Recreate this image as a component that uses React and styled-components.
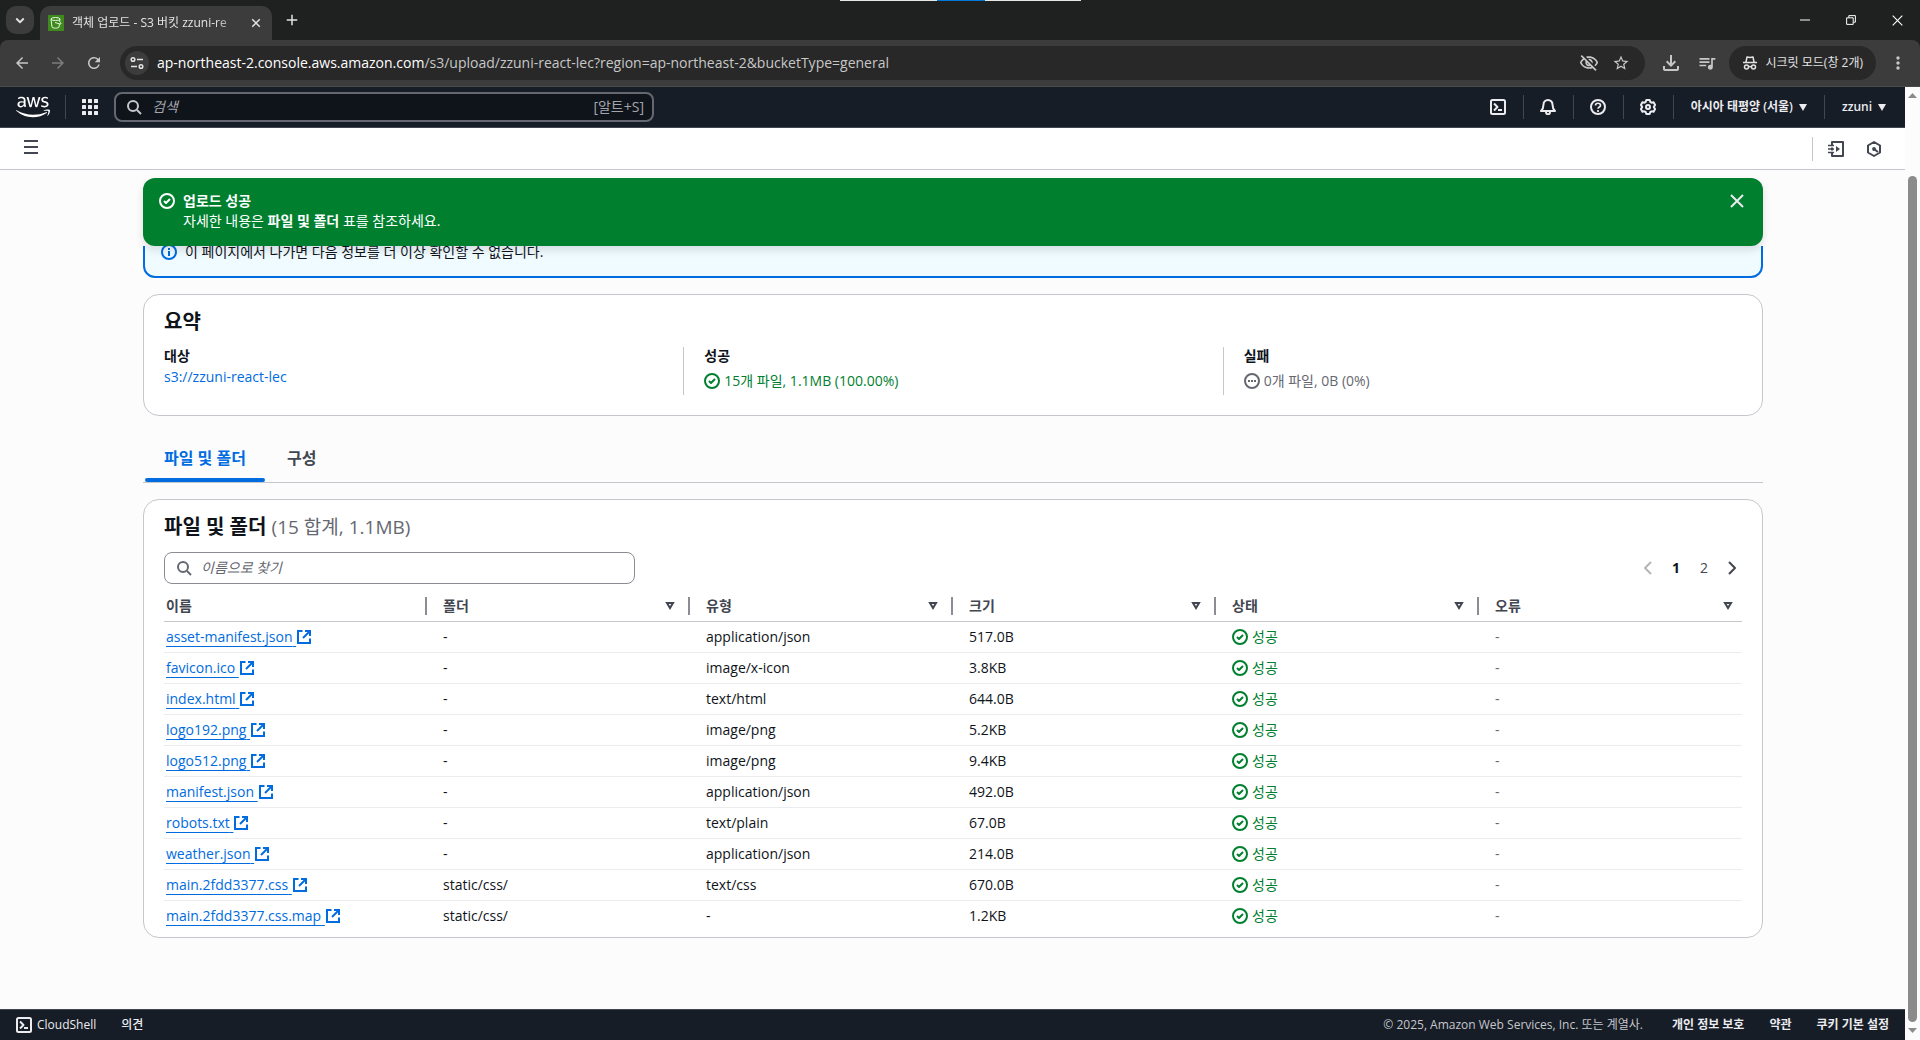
import React, { useState } from 'react'
import styled, { createGlobalStyle } from 'styled-components';
import {
  MdArrowBack,
  MdArrowForward,
  MdRefresh,
  MdOutlineVisibilityOff,
  MdStarBorder,
  MdOutlineFileDownload,
  MdQueueMusic,
  MdMoreVert,
} from 'react-icons/md';
import { FaAws } from 'react-icons/fa';

const files = [
  { name: 'asset-manifest.json', folder: '-', type: 'application/json', size: '517.0B' },
  { name: 'favicon.ico', folder: '-', type: 'image/x-icon', size: '3.8KB' },
  { name: 'index.html', folder: '-', type: 'text/html', size: '644.0B' },
  { name: 'logo192.png', folder: '-', type: 'image/png', size: '5.2KB' },
  { name: 'logo512.png', folder: '-', type: 'image/png', size: '9.4KB' },
  { name: 'manifest.json', folder: '-', type: 'application/json', size: '492.0B' },
  { name: 'robots.txt', folder: '-', type: 'text/plain', size: '67.0B' },
  { name: 'weather.json', folder: '-', type: 'application/json', size: '214.0B' },
  { name: 'main.2fdd3377.css', folder: 'static/css/', type: 'text/css', size: '670.0B' },
  { name: 'main.2fdd3377.css.map', folder: 'static/css/', type: '-', size: '1.2KB' },
];

const columns = ['이름', '폴더', '유형', '크기', '상태', '오류'];

/* ---------- icons (16 x 16, 2px strokes) ---------- */

const Icon = ({ size = 16, width = 2, children }) => (
  <svg width={size} height={size} viewBox="0 0 16 16" fill="none" stroke="currentColor"
    strokeWidth={width} strokeLinejoin="round" aria-hidden="true">
    {children}
  </svg>
);

const CheckIcon = () => (
  <Icon>
    <circle cx="8" cy="8" r="7" />
    <path d="M5 8l2 2 4-4" />
  </Icon>
);

const PendingIcon = () => (
  <Icon>
    <circle cx="8" cy="8" r="7" />
    <path d="M4 8h2M7 8h2M10 8h2" />
  </Icon>
);

const InfoIcon = () => (
  <Icon>
    <circle cx="8" cy="8" r="7" />
    <path d="M8 7v5M8 4v2" />
  </Icon>
);

const CloseIcon = () => <Icon><path d="M2 2l12 12M14 2L2 14" /></Icon>;

const SearchIcon = () => (
  <Icon>
    <circle cx="7" cy="7" r="5" />
    <path d="M15 15l-4-4" />
  </Icon>
);

const ExternalIcon = () => (
  <Icon>
    <path d="M6.500 2H2v12h12V9.500M9 2h5v5" strokeLinejoin="miter" />
    <path d="M7 9l7-7" />
  </Icon>
);

const ShellIcon = () => (
  <Icon>
    <rect x="1" y="1" width="14" height="14" rx="1.500" />
    <path d="M4 4.500L7.500 8 4 11.500M8 11h4" />
  </Icon>
);

const BellIcon = () => (
  <Icon>
    <path d="M1 12h14c-2-2-2.500-3.500-2.500-6.500a4.500 4.500 0 0 0-9 0C3.500 8.500 3 10 1 12z" />
    <path d="M6 13c0 3 4 3 4 0" />
  </Icon>
);

const HelpIcon = () => (
  <Icon>
    <circle cx="8" cy="8" r="7" />
    <path d="M5.500 6.500c0-3 5-3 5 0C10.500 8 8 8 8 9.800M8 11v2" strokeWidth="1.700" />
  </Icon>
);

const GearIcon = () => (
  <Icon>
    <path d="M6.300 1h3.400l.6 2 1.300.7 2-.5 1.500 2.700L13.800 8l1.300 2.100-1.500 2.700-2-.5-1.300.7-.6 2H6.300l-.6-2-1.300-.7-2 .5-1.500-2.700L2.200 8 .9 5.900l1.500-2.700 2 .5L5.700 3z" />
    <circle cx="8" cy="8" r="2" />
  </Icon>
);

const TutorialIcon = () => (
  <Icon>
    <path d="M4 4V1h11v14H4v-3M4 6.500v3" />
    <path d="M0 4.500h6M0 8h6M0 11.500h6" strokeWidth="1.600" />
    <path d="M8 5l4 3-4 3z" fill="currentColor" stroke="none" />
  </Icon>
);

const HexIcon = () => (
  <Icon>
    <path d="M8 1l6 3.500v7L8 15l-6-3.500v-7z" />
    <path d="M8 8l4 3" />
    <circle cx="8" cy="8" r="1.900" fill="currentColor" stroke="none" />
  </Icon>
);

const GridIcon = () => (
  <svg width="16" height="16" viewBox="0 0 16 16" fill="currentColor" aria-hidden="true">
    {[0, 6, 12].map((y) => [0, 6, 12].map((x) => <rect key={x + '-' + y} x={x} y={y} width="4" height="4" rx="0.500" />))}
  </svg>
);

const FilterIcon = () => (
  <svg width="10" height="8" viewBox="0 0 10 8" fill="none" stroke="currentColor" strokeWidth="2" aria-hidden="true">
    <path d="M2 1h6L5 6z" />
  </svg>
);

const CaretIcon = () => (
  <svg width="8" height="7" viewBox="0 0 8 7" fill="currentColor" aria-hidden="true"><path d="M0 0h8L4 7z" /></svg>
);

const BucketIcon = () => (
  <svg width="16" height="16" viewBox="0 0 16 16" fill="none" stroke="#e9f5df" aria-hidden="true">
    <rect width="16" height="16" fill="#3f8a1f" stroke="none" />
    <ellipse cx="7.500" cy="4" rx="4.500" ry="1.500" />
    <path d="M3 4l1 8c0 1.500 7 1.500 7 0l.4-3M12 4l-.4 3M7 7.500l5 1.500c1.500.2 1.500-1 0-1.500" />
  </svg>
);

const TuneIcon = () => (
  <Icon width="1.500">
    <circle cx="4" cy="4.500" r="1.800" />
    <path d="M8 4.500h6M2 11.500h6" />
    <circle cx="12" cy="11.500" r="1.800" />
  </Icon>
);

const IncognitoIcon = () => (
  <Icon width="1.500">
    <path d="M4 7l1-5 3 .5L11 2l1 5M1 7.500h14" />
    <circle cx="4.500" cy="12" r="2" />
    <circle cx="11.500" cy="12" r="2" />
    <path d="M6.500 12q1.500-1 3 0" />
  </Icon>
);

export default function App() {
  const [query, setQuery] = useState('');
  const [search, setSearch] = useState('');

  return (
    <Window>
      <GlobalStyle />
      <ScreenHandle><i /></ScreenHandle>
      <TabStrip>
        <TabSearch aria-label="탭 검색">
          <Icon size={12} width={2.4}><path d="M3 6l5 5 5-5" /></Icon>
        </TabSearch>
        <BrowserTab>
          <BucketIcon />
          <span>객체 업로드 - S3 버킷 zzuni-re</span>
          <TabButton aria-label="탭 닫기"><Icon size={12}><path d="M3 3l10 10M13 3L3 13" /></Icon></TabButton>
        </BrowserTab>
        <TabButton aria-label="새 탭"><Icon size={14} width={1.7}><path d="M8 2v12M2 8h12" /></Icon></TabButton>
        <WindowButtons>
          <TabButton aria-label="최소화"><Icon size={10} width={1.6}><path d="M0 8h16" /></Icon></TabButton>
          <TabButton aria-label="이전 크기로 복원">
            <Icon size={10} width={1.6}><path d="M1 4.500h10.500V15H1zM4.500 4V1H15v10.500h-3" strokeLinejoin="miter" /></Icon>
          </TabButton>
          <TabButton aria-label="닫기"><Icon size={11} width={1.6}><path d="M1 1l14 14M15 1L1 15" /></Icon></TabButton>
        </WindowButtons>
      </TabStrip>

      <Toolbar>
        <ToolButton aria-label="뒤로"><MdArrowBack size={18} /></ToolButton>
        <ToolButton aria-label="앞으로" disabled><MdArrowForward size={18} /></ToolButton>
        <ToolButton aria-label="새로고침"><MdRefresh size={18} /></ToolButton>
        <Omnibox>
          <SiteInfo aria-label="사이트 정보"><TuneIcon /></SiteInfo>
          <Url><b>ap-northeast-2.console.aws.amazon.com</b>/s3/upload/zzuni-react-lec?region=ap-northeast-2&amp;bucketType=general</Url>
          <ToolButton aria-label="쿠키 차단됨" $w={32}><MdOutlineVisibilityOff size={20} /></ToolButton>
          <ToolButton aria-label="북마크" $w={32}><MdStarBorder size={18} /></ToolButton>
        </Omnibox>
        <ToolButton aria-label="다운로드"><MdOutlineFileDownload size={24} /></ToolButton>
        <ToolButton aria-label="미디어"><MdQueueMusic size={20} /></ToolButton>
        <Incognito><IncognitoIcon />시크릿 모드(창 2개)</Incognito>
        <ToolButton aria-label="더보기"><MdMoreVert size={20} /></ToolButton>
      </Toolbar>

      <Viewport>
        <Page>
          <AwsNav>
            <LogoLink href="#home" aria-label="AWS"><FaAws size={34} /></LogoLink>
            <NavLine />
            <NavButton aria-label="서비스" $w={48}><GridIcon /></NavButton>
            <NavSearch>
              <SearchIcon />
              <input aria-label="검색" placeholder="검색" value={search} onChange={(e) => setSearch(e.target.value)} />
              <span>[알트+S]</span>
            </NavSearch>
            <NavTools>
              <NavButton aria-label="CloudShell"><ShellIcon /></NavButton>
              <NavLine />
              <NavButton aria-label="알림"><BellIcon /></NavButton>
              <NavLine />
              <NavButton aria-label="지원"><HelpIcon /></NavButton>
              <NavLine />
              <NavButton aria-label="설정"><GearIcon /></NavButton>
              <NavLine />
              <NavMenu>아시아 태평양 (서울)<CaretIcon /></NavMenu>
              <NavLine />
              <NavMenu>zzuni<CaretIcon /></NavMenu>
            </NavTools>
          </AwsNav>

          <SubBar>
            <MenuButton aria-label="탐색 열기">
              <Icon><path d="M1 2h14M1 8h14M1 14h14" /></Icon>
            </MenuButton>
            <SubTools>
              <IconButton aria-label="자습서"><TutorialIcon /></IconButton>
              <IconButton aria-label="도구"><HexIcon /></IconButton>
            </SubTools>
          </SubBar>

          <Main>
            <Flash role="status">
              <CheckIcon />
              <div>
                <strong>업로드 성공</strong>
                <p>자세한 내용은 <strong>파일 및 폴더</strong> 표를 참조하세요.</p>
              </div>
              <FlashClose aria-label="닫기"><CloseIcon /></FlashClose>
            </Flash>
            <ScrolledArea>
              <Alert>
                <InfoIcon />
                이 페이지에서 나가면 다음 정보를 더 이상 확인할 수 없습니다.
              </Alert>
            </ScrolledArea>

            <Summary>
              <Title>요약</Title>
              <Stats>
                <Stat>
                  <dt>대상</dt>
                  <dd><a href="#bucket">s3://zzuni-react-lec</a></dd>
                </Stat>
                <Stat>
                  <dt>성공</dt>
                  <dd><Status $tall><CheckIcon />15개 파일, 1.1MB (100.00%)</Status></dd>
                </Stat>
                <Stat>
                  <dt>실패</dt>
                  <dd><Status $tall $muted><PendingIcon />0개 파일, 0B (0%)</Status></dd>
                </Stat>
              </Stats>
            </Summary>

            <Tabs role="tablist">
              <Tab role="tab" aria-selected="true" $active>파일 및 폴더</Tab>
              <Tab role="tab" aria-selected="false">구성</Tab>
            </Tabs>

            <FilesCard>
              <Title>파일 및 폴더 <span>(15 합계, 1.1MB)</span></Title>
              <Tools>
                <Filter>
                  <SearchIcon />
                  <input aria-label="이름으로 찾기" placeholder="이름으로 찾기" value={query} onChange={(e) => setQuery(e.target.value)} />
                </Filter>
                <Pager aria-label="페이지">
                  <PageButton aria-label="이전 페이지" disabled><Icon><path d="M11 2L5 8l6 6" /></Icon></PageButton>
                  <PageButton $current>1</PageButton>
                  <PageButton>2</PageButton>
                  <PageButton aria-label="다음 페이지"><Icon><path d="M5 2l6 6-6 6" /></Icon></PageButton>
                </Pager>
              </Tools>
              <Table>
                <thead>
                  <tr>
                    {columns.map((col, i) => (
                      <th key={col} scope="col">
                        <HeadCell $first={i === 0}>
                          {col}
                          {i > 0 && <FilterIcon />}
                        </HeadCell>
                      </th>
                    ))}
                  </tr>
                </thead>
                <tbody>
                  {files.filter((f) => f.name.includes(query)).map((f) => (
                    <tr key={f.name}>
                      <td><FileLink href={'#' + f.name}><span>{f.name}&nbsp;</span><ExternalIcon /></FileLink></td>
                      <td>{f.folder}</td>
                      <td>{f.type}</td>
                      <td>{f.size}</td>
                      <td><Status><CheckIcon />성공</Status></td>
                      <td><Dim>-</Dim></td>
                    </tr>
                  ))}
                </tbody>
              </Table>
            </FilesCard>
          </Main>

          <Footer>
            <FootButton><ShellIcon />CloudShell</FootButton>
            <FootButton>의견</FootButton>
            <Copyright>© 2025, Amazon Web Services, Inc. 또는 계열사.</Copyright>
            <FootLink href="#privacy">개인 정보 보호</FootLink>
            <FootLink href="#terms">약관</FootLink>
            <FootLink href="#cookies">쿠키 기본 설정</FootLink>
          </Footer>
        </Page>
        <Scrollbar aria-hidden="true">
          <svg width="9" height="5" viewBox="0 0 9 5"><path d="M0 5h9L4.500 0z" /></svg>
          <div />
          <svg width="9" height="5" viewBox="0 0 9 5"><path d="M0 0h9L4.500 5z" /></svg>
        </Scrollbar>
      </Viewport>
    </Window>
  )
}

const GlobalStyle = createGlobalStyle`
*{
  box-sizing: border-box;
}
body{
  margin: 0;
  font-family: "Open Sans", "Noto Sans CJK KR", sans-serif;
  font-size: 14px;
  line-height: 20px;
  color: #0f141a;
}
button, input{
  font: inherit;
  color: inherit;
}
button{
  border: none;
  background: none;
  padding: 0;
  display: flex;
  align-items: center;
  justify-content: center;
}
a{
  color: #006ce0;
  text-decoration: none;
}
svg{
  display: block;
  flex: none;
}
`;

const Window = styled.div`
display: flex;
flex-direction: column;
min-height: 100vh;
background-color: #1f2120;
`;

/* thin handle that hangs over the top edge of the window */
const ScreenHandle = styled.div`
position: absolute;
top: 0;
left: 50%;
width: 241px;
height: 1px;
margin-left: -120px;
display: flex;
justify-content: center;
background-color: #e6e6e4;

i{
  width: 48px;
  background-color: #0078d7;
}
`;

const TabStrip = styled.div`
display: flex;
align-items: center;
height: 40px;
padding-left: 6px;
color: #e3e3e3;
`;

const TabSearch = styled.button`
width: 28px;
height: 28px;
border-radius: 10px;
background-color: #3c3c3c;
`;

const BrowserTab = styled.div`
display: flex;
align-items: center;
align-self: flex-end;
width: 232px;
height: 34px;
margin: 0 6px;
padding: 0 2px 0 8px;
border-radius: 10px 10px 0 0;
background-color: #3c3c3c;
font-size: 12px;

span{
  flex: 1;
  margin-left: 8px;
  white-space: nowrap;
  mask-image: linear-gradient(to right, #000 85%, transparent);
}
`;

const TabButton = styled.button`
width: 28px;
height: 28px;
`;

const WindowButtons = styled.div`
display: flex;
gap: 18px;
margin-left: auto;
padding-right: 9px;
color: #fff;
`;

const Toolbar = styled.div`
display: flex;
align-items: center;
height: 47px;
padding: 0 4px;
border-radius: 8px 8px 0 0;
border-bottom: 1px solid #4a4a4a;
background-color: #3c3c3c;
color: #c7c7c7;
`;

const ToolButton = styled.button`
width: ${(p) => p.$w || 36}px;
height: 34px;

&:disabled{
  color: #7c7c7c;
}
`;

const Omnibox = styled.div`
display: flex;
align-items: center;
flex: 1;
height: 34px;
margin: 0 8px;
padding: 0 8px 0 5px;
border-radius: 17px;
background-color: #282828;
`;

const SiteInfo = styled.button`
width: 24px;
height: 24px;
border-radius: 50%;
background-color: #3c3c3c;
color: #e3e3e3;
`;

const Url = styled.div`
flex: 1;
margin-left: 8px;

b{
  font-weight: 400;
  color: #fff;
}
`;

const Incognito = styled.button`
gap: 8px;
height: 34px;
margin: 0 4px;
padding: 0 13px;
border-radius: 17px;
background-color: #282828;
color: #e3e3e3;
font-size: 12px;
white-space: nowrap;
`;

const Viewport = styled.div`
display: flex;
flex: 1;
`;

const Page = styled.div`
display: flex;
flex-direction: column;
flex: 1;
min-width: 0;
background-color: #fcfcfd;
`;

const AwsNav = styled.header`
display: flex;
align-items: center;
height: 41px;
border-bottom: 1px solid #424650;
background-color: #161d26;
color: #ebebf0;
`;

const LogoLink = styled.a`
display: flex;
justify-content: center;
width: 65px;
color: #fff;
`;

const NavLine = styled.span`
width: 1px;
height: 24px;
background-color: #424650;
`;

const NavButton = styled.button`
width: ${(p) => p.$w || 49}px;
height: 40px;
`;

const NavSearch = styled.label`
display: flex;
align-items: center;
width: 540px;
height: 30px;
padding: 0 8px 0 10px;
border: 2px solid #656871;
border-radius: 8px;
background-color: #0f141a;
color: #c6c6cd;

input{
  flex: 1;
  min-width: 0;
  margin-left: 8px;
  padding: 0 2px;
  border: none;
  outline: none;
  background: none;
}
input::placeholder{
  color: #a4a4ad;
  font-style: italic;
}
span{
  color: #a4a4ad;
}
`;

const NavTools = styled.div`
display: flex;
align-items: center;
margin-left: auto;
padding-right: 2px;
`;

const NavMenu = styled.button`
gap: 6px;
height: 40px;
padding: 0 17px;
font-size: 12px;
font-weight: 600;
white-space: nowrap;
`;

const SubBar = styled.div`
display: flex;
align-items: center;
justify-content: space-between;
height: 42px;
padding: 0 12px;
border-bottom: 1px solid #c6c6cd;
background-color: #fff;
color: #424650;
`;

const IconButton = styled.button`
width: 38px;
height: 24px;
`;

const MenuButton = styled(IconButton)`
align-items: flex-start;
padding-top: 2px;
`;

const SubTools = styled.div`
display: flex;
padding-left: 4px;
border-left: 1px solid #c6c6cd;
`;

const Main = styled.main`
flex: 1;
padding: 8px 142px 70px 143px;
`;

const Flash = styled.div`
position: relative;
display: flex;
gap: 8px;
height: 68px;
padding: 13px 18px 0 16px;
border-radius: 12px;
background-color: #00802f;
box-shadow: 0 4px 8px rgba(0, 7, 22, 0.12);
color: #fff;

> svg{
  margin-top: 2px;
}
> div{
  flex: 1;
}
p{
  margin: 0;
}
`;

const FlashClose = styled.button`
width: 16px;
height: 20px;
color: #ebebf0;
`;

/* only the lower part of the scrolled content shows under the flash bar */
const ScrolledArea = styled.div`
display: flex;
flex-direction: column;
justify-content: flex-end;
height: 32px;
overflow: hidden;
`;

const Alert = styled.div`
display: flex;
align-items: center;
gap: 8px;
flex: none;
padding: 14px 16px;
border: 2px solid #006ce0;
border-radius: 12px;
background-color: #f0fbff;

svg{
  color: #006ce0;
}
`;

const Card = styled.section`
border: 1px solid #c6c6cd;
border-radius: 16px;
background-color: #fff;
`;

const Summary = styled(Card)`
margin-top: 16px;
padding: 15px 20px 20px;
`;

const Title = styled.h2`
margin: 0;
font-size: 20px;
line-height: 24px;

span{
  font-weight: 400;
  font-size: 19px;
  color: #656871;
}
`;

const Stats = styled.dl`
display: grid;
grid-template-columns: repeat(3, 1fr);
margin: 13px -20px 0;
`;

const Stat = styled.div`
height: 48px;
padding-left: 20px;

& + &{
  border-left: 1px solid #c6c6cd;
}
dt{
  padding-bottom: 2px;
  font-weight: 700;
  line-height: 18px;
}
dd{
  margin: 0;
}
`;

const Status = styled.span`
display: flex;
align-items: center;
gap: 4px;
height: ${(p) => (p.$tall ? 28 : 20)}px;
color: ${(p) => (p.$muted ? '#656871' : '#00802f')};
`;

const Tabs = styled.div`
display: flex;
margin-top: 20px;
border-bottom: 1px solid #c6c6cd;
`;

const Tab = styled.button`
position: relative;
height: 46px;
padding: 0 20px 2px 21px;
font-size: 16px;
font-weight: 700;
color: ${(p) => (p.$active ? '#006ce0' : '#424650')};

& + &::before{
  content: "";
  position: absolute;
  left: 0;
  top: 9px;
  width: 1px;
  height: 28px;
  background-color: #c6c6cd;
}
&::after{
  content: "";
  position: absolute;
  left: 2px;
  right: 1px;
  bottom: 0;
  height: 4px;
  border-radius: 2px;
  background-color: ${(p) => (p.$active ? '#006ce0' : 'transparent')};
}
`;

const FilesCard = styled(Card)`
margin-top: 16px;
padding: 15px 20px 5px;
`;

const Tools = styled.div`
display: flex;
align-items: center;
justify-content: space-between;
margin: 13px 0 6px;
`;

const Filter = styled.label`
display: flex;
align-items: center;
width: 471px;
height: 32px;
padding: 0 11px;
border: 1px solid #8c8c94;
border-radius: 8px;
color: #656871;

input{
  flex: 1;
  margin-left: 7px;
  padding: 0 2px;
  border: none;
  outline: none;
  background: none;
  color: #0f141a;
}
input::placeholder{
  color: #656871;
  font-style: italic;
}
`;

const Pager = styled.nav`
display: flex;
margin-right: -4px;
`;

const PageButton = styled.button`
width: 28px;
height: 24px;
font-weight: ${(p) => (p.$current ? 700 : 400)};
color: ${(p) => (p.$current ? '#0f141a' : '#424650')};

&:disabled{
  color: #b4b4bb;
}
`;

const Table = styled.table`
width: 100%;
table-layout: fixed;
border-collapse: separate;
border-spacing: 0;

th{
  height: 32px;
  padding: 0;
  border-bottom: 1px solid #c6c6cd;
  text-align: left;
}
td{
  height: 31px;
  padding: 0 0 0 16px;
  border-bottom: 1px solid #ebebf0;
}
td:first-child{
  padding-left: 2px;
}
tbody tr:last-child td{
  border-bottom-color: transparent;
}
`;

const HeadCell = styled.div`
display: flex;
align-items: center;
justify-content: space-between;
height: 18px;
padding-right: ${(p) => (p.$first ? 0 : 13)}px;
padding-left: ${(p) => (p.$first ? 2 : 16)}px;
border-right: 2px solid #8c8c94;
color: #424650;
font-weight: 700;

th:last-child &{
  padding-right: 9px;
  border-right: none;
}
`;

const FileLink = styled.a`
display: inline-flex;
align-items: center;
height: 20px;

span{
  text-decoration: underline;
  text-underline-offset: 4px;
}
`;

const Dim = styled.span`
color: #656871;
`;

const Footer = styled.footer`
display: flex;
align-items: center;
gap: 25px;
height: 31px;
padding: 0 16px;
border-top: 1px solid #424650;
background-color: #161d26;
color: #ebebf0;
font-size: 12px;
`;

const FootButton = styled.button`
gap: 5px;
font-weight: 500;
`;

const Copyright = styled.span`
margin-left: auto;
margin-right: 4px;
color: #c6c6cd;
`;

const FootLink = styled.a`
color: #ebebf0;
font-weight: 700;
`;

const Scrollbar = styled.div`
display: flex;
flex-direction: column;
align-items: center;
width: 15px;
padding: 6px 0 7px;
background-color: #fcfcfc;

svg{
  fill: #8b8b8b;
}
div{
  flex: 1;
  width: 9px;
  margin: 78px 0 6px;
  border-radius: 5px;
  background-color: #8b8b8b;
}
`;
